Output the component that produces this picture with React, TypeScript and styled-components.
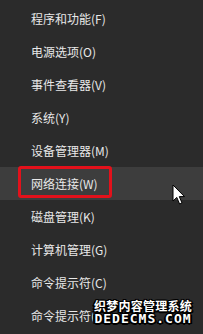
import React from "react";
import styled, { createGlobalStyle } from "styled-components";

const Global = createGlobalStyle`
  html, body { margin: 0; padding: 0; background: #2b2b2b; }
  body { width: 203px; height: 334px; overflow: hidden; }
`;

const Menu = styled.div`
  position: relative;
  width: 203px;
  height: 334px;
  background: #2b2b2b;
  padding-top: 2px;
  box-sizing: border-box;
  display: flex;
  flex-direction: column;
  font-family: "Microsoft YaHei", "Noto Sans CJK SC", sans-serif;
`;

const Row = styled.div<{ $active?: boolean }>`
  height: 33px;
  display: flex;
  align-items: center;
  padding-left: 31px;
  font-size: 12px;
  color: #e8e8e8;
  background: ${(p) => (p.$active ? "#3d3d3d" : "transparent")};
  position: relative;
  white-space: nowrap;
`;

const Label = styled.span<{ $clip?: boolean }>`
  position: relative;
  display: inline-block;
  overflow: hidden;
  max-width: ${(p) => (p.$clip ? "62px" : "none")};
`;

const Highlight = styled.div`
  position: absolute;
  left: 18px;
  top: -1px;
  width: 94px;
  height: 32px;
  border: 3px solid #e3111b;
  border-radius: 3px;
  box-sizing: border-box;
`;

const Cursor = styled.svg`
  position: absolute;
  left: 172px;
  top: 184px;
`;

const Watermark = styled.div`
  position: absolute;
  left: 93px;
  top: 299px;
  width: 100px;
  display: flex;
  flex-direction: column;
  align-items: center;
  color: #ffffff;
  text-shadow: 1px 1px 0 #000, -1px -1px 0 #000, 1px -1px 0 #000, -1px 1px 0 #000,
    0 1px 0 #000, 0 -1px 0 #000, 1px 0 0 #000, -1px 0 0 #000, 2px 1px 0 #000,
    -2px 1px 0 #000, 0 2px 0 #000;
`;

const WmTitle = styled.div`
  font-family: "Noto Sans CJK SC", sans-serif;
  font-weight: 700;
  font-size: 12px;
  line-height: 14px;
  letter-spacing: 0.25px;
`;

const WmUrl = styled.div`
  font-family: "DejaVu Sans Mono", monospace;
  font-weight: 700;
  font-size: 13px;
  line-height: 12px;
  letter-spacing: 1px;
`;

const items = [
  "程序和功能(F)",
  "电源选项(O)",
  "事件查看器(V)",
  "系统(Y)",
  "设备管理器(M)",
  "网络连接(W)",
  "磁盘管理(K)",
  "计算机管理(G)",
  "命令提示符(C)",
  "命令提示符(管理员)(A)",
];

export default function App() {
  return (
    <>
      <Global />
      <Menu>
        {items.map((t, i) => (
          <Row key={t} $active={i === 5}>
            {i === 5 && <Highlight />}
            <Label $clip={i === 9}>{t}</Label>
          </Row>
        ))}
        <Cursor width="14" height="22" viewBox="0 0 14 22">
          <path
            d="M1 1 L1 17 L4.8 13.4 L7.6 20 L10 19 L7.3 12.6 L12.5 12.6 Z"
            fill="#ffffff"
            stroke="#000000"
            strokeWidth="1"
            strokeLinejoin="round"
          />
        </Cursor>
        <Watermark>
          <WmTitle>织梦内容管理系统</WmTitle>
          <WmUrl>DEDECMS.COM</WmUrl>
        </Watermark>
      </Menu>
    </>
  );
}
